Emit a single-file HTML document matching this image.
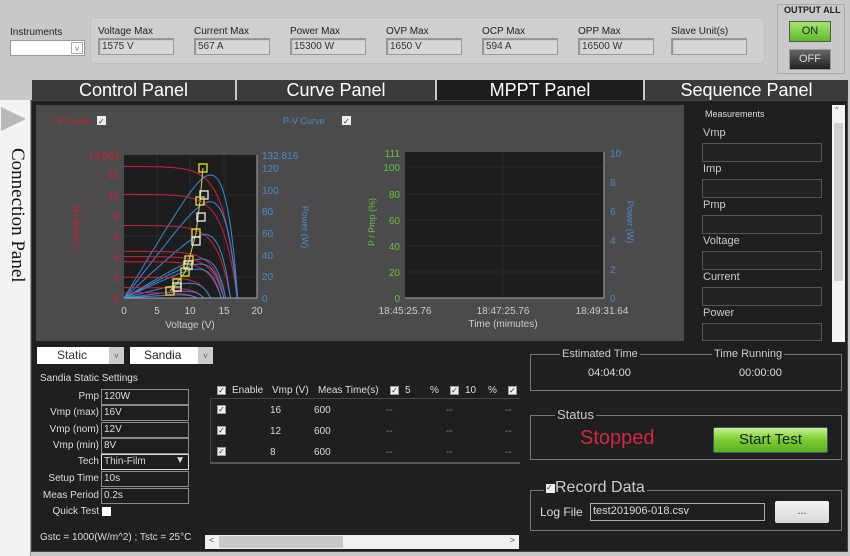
<!DOCTYPE html>
<html><head><meta charset="utf-8"><style>
*{box-sizing:border-box;margin:0;padding:0}
body{width:850px;height:556px;position:relative;overflow:hidden;background:#c9c9c9;font-family:"Liberation Sans",sans-serif}
.a{position:absolute}
.lbl{position:absolute;font-size:10px;color:#222}
.fld{position:absolute;height:17px;width:76px;background:#d6d6d6;border:1px solid #9a9a9a;box-shadow:inset 1px 1px 1px #888;font-size:10px;color:#333;padding:2px 3px}
.tab{position:absolute;top:80px;height:20px;background:#3a3a3a;color:#fff;font-size:18px;text-align:center;line-height:21px;transform-origin:center}
.w{color:#ddd;font-size:10px;position:absolute}
.inp{position:absolute;height:16px;width:88px;border:1px solid #8a8a8a;background:#1e1e1e;color:#ddd;font-size:10px;padding:1px 2px}
.cb{position:absolute;width:9px;height:9px;background:#eee;border:1px solid #999;font-size:8px;color:#333;line-height:7px;text-align:center}
.mb{position:absolute;left:702px;width:120px;height:19px;border:1px solid #555;background:#232323}
.ml{position:absolute;left:703px;color:#ccc;font-size:11px}
.box{position:absolute;border:1px solid #777}
.cap{position:absolute;background:#1f1f1f;color:#ccc;padding:0 2px}
</style></head><body>
<!-- top bar -->
<div class="lbl" style="left:10px;top:27px">Instruments</div>
<div class="a" style="left:10px;top:40px;width:75px;height:16px;background:#fff;border:1px solid #999"><div class="a" style="right:1px;top:1px;width:12px;height:12px;border:1px solid #aaa;font-size:8px;color:#777;text-align:center;line-height:11px">v</div></div>
<div class="a" style="left:90px;top:17px;width:675px;height:47px;border-radius:5px;background:#cfcfcf;border:1px solid #bdbdbd"></div>
<div class="lbl" style="left:98px;top:26px">Voltage Max</div><div class="fld" style="left:98px;top:38px">1575 V</div>
<div class="lbl" style="left:194px;top:26px">Current Max</div><div class="fld" style="left:194px;top:38px">567 A</div>
<div class="lbl" style="left:290px;top:26px">Power Max</div><div class="fld" style="left:290px;top:38px">15300 W</div>
<div class="lbl" style="left:386px;top:26px">OVP Max</div><div class="fld" style="left:386px;top:38px">1650 V</div>
<div class="lbl" style="left:482px;top:26px">OCP Max</div><div class="fld" style="left:482px;top:38px">594 A</div>
<div class="lbl" style="left:578px;top:26px">OPP Max</div><div class="fld" style="left:578px;top:38px">16500 W</div>
<div class="lbl" style="left:671px;top:26px">Slave Unit(s)</div><div class="fld" style="left:671px;top:38px"></div>
<div class="a" style="left:777px;top:4px;width:68px;height:70px;border:1px solid #aaa"></div>
<div class="lbl" style="left:784px;top:5px;font-size:9px;font-weight:bold">OUTPUT ALL</div>
<div class="a" style="left:789px;top:21px;width:42px;height:21px;background:linear-gradient(#a8e870,#5cb82a);border:1px solid #555;font-size:11px;text-align:center;line-height:19px;color:#222">ON</div>
<div class="a" style="left:789px;top:49px;width:42px;height:21px;background:linear-gradient(#666,#222);border:1px solid #999;font-size:11px;text-align:center;line-height:19px;color:#ddd">OFF</div>
<!-- tabs -->
<div class="tab" style="left:32px;width:203px">Control Panel</div>
<div class="tab" style="left:237px;width:198px">Curve Panel</div>
<div class="tab" style="left:437px;width:206px;background:#1c1c1c">MPPT Panel</div>
<div class="tab" style="left:645px;width:203px">Sequence Panel</div>
<!-- left strip -->
<div class="a" style="left:0;top:100px;width:31px;height:456px;background:#f3f3f3;border-right:1px solid #999"></div>
<svg class="a" style="left:0;top:106px" width="28" height="26"><polygon points="1,1 1,25 26,13" fill="#b8b8b8"/></svg>
<div class="a" style="left:2px;top:148px;width:26px;height:140px;"><div style="position:absolute;left:26px;top:0;transform:rotate(90deg);transform-origin:0 0;white-space:nowrap;font-family:'Liberation Serif',serif;font-size:19px;color:#111">Connection Panel</div></div>
<!-- main dark -->
<div class="a" style="left:31px;top:100px;width:817px;height:452px;background:#1f1f1f;border:1px solid #444"></div>
<div class="a" style="left:36px;top:105px;width:648px;height:236px;background:#4b4b4b"></div>
<svg class="a" style="left:0;top:0" width="850" height="556" id="sv" font-family="Liberation Sans, sans-serif" font-size="10">
<text x="52" y="124" fill="#d02030" font-size="9">I-V Curve</text>
<rect x="97" y="116" width="9" height="9" fill="#eee"/><text x="98" y="124" font-size="8" fill="#333">✓</text>
<text x="283" y="124" fill="#4a8ad0" font-size="9">P-V Curve</text>
<rect x="342" y="116" width="9" height="9" fill="#eee"/><text x="343" y="124" font-size="8" fill="#333">✓</text>
<rect x="124" y="155" width="133" height="143" fill="#1d1d1d"/>
<g stroke="#2c3a3a" stroke-width="0.6"><line x1="157" y1="155" x2="157" y2="298"/><line x1="190" y1="155" x2="190" y2="298"/><line x1="224" y1="155" x2="224" y2="298"/><line x1="124" y1="195" x2="257" y2="195"/><line x1="124" y1="236" x2="257" y2="236"/><line x1="124" y1="277" x2="257" y2="277"/></g>
<g id="curves"></g>
<polyline points="203,168 200,201 196,233 189,260 185,272 177,283 170,291" fill="none" stroke="#d8d860" stroke-width="1"/>
<g fill="none" stroke-width="1.3">
<rect x="199" y="164" width="8" height="8" stroke="#e0e040"/><rect x="200" y="191" width="8" height="8" stroke="#eee"/>
<rect x="196" y="197" width="8" height="8" stroke="#e0e040"/><rect x="197" y="213" width="8" height="8" stroke="#eee"/>
<rect x="192" y="229" width="8" height="8" stroke="#e0e040"/><rect x="192" y="237" width="8" height="8" stroke="#eee"/>
<rect x="185" y="256" width="8" height="8" stroke="#e0e040"/><rect x="184" y="261" width="8" height="8" stroke="#eee"/>
<rect x="181" y="268" width="8" height="8" stroke="#e0e040"/><rect x="173" y="279" width="8" height="8" stroke="#e0e040"/>
<rect x="173" y="283" width="8" height="8" stroke="#eee"/><rect x="166" y="287" width="8" height="8" stroke="#e0e040"/>
</g>
<line x1="124" y1="298" x2="257" y2="298" stroke="#aaa"/><line x1="257" y1="155" x2="257" y2="298" stroke="#aaa"/>
<g fill="#d02030" text-anchor="end"><text x="119" y="159">13.803</text><text x="119" y="178">12</text><text x="119" y="199">10</text><text x="119" y="220">8</text><text x="119" y="240">6</text><text x="119" y="261">4</text><text x="119" y="281">2</text><text x="119" y="302">0</text></g>
<g fill="#4a8ad0"><text x="262" y="159">132.816</text><text x="262" y="172">120</text><text x="262" y="194">100</text><text x="262" y="215">80</text><text x="262" y="237">60</text><text x="262" y="259">40</text><text x="262" y="280">20</text><text x="262" y="302">0</text></g>
<g fill="#ccc" text-anchor="middle"><text x="124" y="314">0</text><text x="157" y="314">5</text><text x="190" y="314">10</text><text x="224" y="314">15</text><text x="257" y="314">20</text><text x="190" y="328">Voltage (V)</text></g>
<text transform="translate(79,227) rotate(-90)" fill="#d02030" text-anchor="middle" font-size="9">Current (A)</text>
<text transform="translate(302,227) rotate(90)" fill="#4a8ad0" text-anchor="middle" font-size="9">Power (W)</text>
<!-- chart 2 -->
<rect x="405" y="152" width="199" height="146" fill="#1d1d1d"/>
<g stroke="#2c3a3a" stroke-width="0.6"><line x1="503" y1="152" x2="503" y2="298"/><line x1="405" y1="194" x2="604" y2="194"/><line x1="405" y1="220" x2="604" y2="220"/><line x1="405" y1="246" x2="604" y2="246"/><line x1="405" y1="272" x2="604" y2="272"/><line x1="405" y1="167" x2="604" y2="167"/></g>
<line x1="405" y1="298" x2="604" y2="298" stroke="#aaa"/><line x1="604" y1="152" x2="604" y2="298" stroke="#aaa"/>
<g fill="#6cc23a" text-anchor="end"><text x="400" y="157">111</text><text x="400" y="171">100</text><text x="400" y="198">80</text><text x="400" y="224">60</text><text x="400" y="250">40</text><text x="400" y="276">20</text><text x="400" y="302">0</text></g>
<g fill="#4a8ad0"><text x="610" y="157">10</text><text x="610" y="186">8</text><text x="610" y="215">6</text><text x="610" y="244">4</text><text x="610" y="273">2</text><text x="610" y="302">0</text></g>
<g fill="#ccc" text-anchor="middle"><text x="405" y="314">18:45:25.76</text><text x="503" y="314">18:47:25.76</text><text x="602" y="314">18:49:31.64</text><text x="503" y="327">Time (mimutes)</text></g>
<text transform="translate(375,222) rotate(-90)" fill="#6cc23a" text-anchor="middle" font-size="9">P / Pmp (%)</text>
<text transform="translate(627,222) rotate(90)" fill="#4a8ad0" text-anchor="middle" font-size="9">Power (W)</text>
</svg>
<!-- measurements -->
<div class="w" style="left:705px;top:109px;font-size:9px">Measurements</div>
<div class="ml" style="top:127px">Vmp</div><div class="mb" style="top:143px"></div>
<div class="ml" style="top:163px">Imp</div><div class="mb" style="top:179px"></div>
<div class="ml" style="top:199px">Pmp</div><div class="mb" style="top:215px"></div>
<div class="ml" style="top:235px">Voltage</div><div class="mb" style="top:251px"></div>
<div class="ml" style="top:271px">Current</div><div class="mb" style="top:287px"></div>
<div class="ml" style="top:307px">Power</div><div class="mb" style="top:323px;height:18px"></div>
<div class="a" style="left:832px;top:105px;width:13px;height:237px;background:#f4f4f4"><div class="a" style="left:2px;top:18px;width:9px;height:158px;background:#cfcfcf"></div><div class="a" style="left:3px;top:2px;font-size:7px;color:#555">^</div></div>
<!-- bottom left -->
<div class="a" style="left:37px;top:347px;width:87px;height:17px;background:#fff;font-size:12px;color:#333;padding-left:20px;line-height:17px">Static<div class="a" style="right:0;top:0;width:15px;height:17px;background:#ccc;font-size:8px;text-align:center;color:#666">v</div></div>
<div class="a" style="left:130px;top:347px;width:83px;height:17px;background:#fff;font-size:12px;color:#222;padding-left:14px;line-height:17px">Sandia<div class="a" style="right:0;top:0;width:15px;height:17px;background:#ccc;font-size:8px;text-align:center;color:#666">v</div></div>
<div class="w" style="left:40px;top:373px">Sandia Static Settings</div>
<div class="w" style="left:40px;top:391px;width:59px;text-align:right">Pmp</div><div class="inp" style="left:101px;top:389px">120W</div>
<div class="w" style="left:40px;top:407px;width:59px;text-align:right">Vmp (max)</div><div class="inp" style="left:101px;top:405px">16V</div>
<div class="w" style="left:40px;top:424px;width:59px;text-align:right">Vmp (nom)</div><div class="inp" style="left:101px;top:422px">12V</div>
<div class="w" style="left:40px;top:440px;width:59px;text-align:right">Vmp (min)</div><div class="inp" style="left:101px;top:438px">8V</div>
<div class="w" style="left:40px;top:456px;width:59px;text-align:right">Tech</div><div class="inp" style="left:101px;top:454px;border-color:#ddd">Thin-Film<span style="position:absolute;right:3px;top:0">▼</span></div>
<div class="w" style="left:40px;top:473px;width:59px;text-align:right">Setup Time</div><div class="inp" style="left:101px;top:471px">10s</div>
<div class="w" style="left:40px;top:490px;width:59px;text-align:right">Meas Period</div><div class="inp" style="left:101px;top:488px">0.2s</div>
<div class="w" style="left:40px;top:506px;width:59px;text-align:right">Quick Test</div><div class="a" style="left:102px;top:507px;width:9px;height:9px;background:#fff"></div>
<div class="w" style="left:40px;top:532px">Gstc = 1000(W/m^2) ; Tstc = 25°C</div>
<!-- table -->
<div class="cb" style="left:217px;top:386px">✓</div>
<div class="w" style="left:232px;top:385px">Enable</div><div class="w" style="left:272px;top:385px">Vmp (V)</div><div class="w" style="left:318px;top:385px">Meas Time(s)</div>
<div class="cb" style="left:390px;top:386px">✓</div><div class="w" style="left:405px;top:385px">5</div><div class="w" style="left:430px;top:385px">%</div>
<div class="cb" style="left:450px;top:386px">✓</div><div class="w" style="left:465px;top:385px">10</div><div class="w" style="left:488px;top:385px">%</div>
<div class="cb" style="left:508px;top:386px">✓</div>
<div class="a" style="left:210px;top:398px;width:310px;height:66px;border-top:1px solid #444;border-left:1px solid #444;border-bottom:2px solid #555"></div>
<div class="cb" style="left:217px;top:405px">✓</div><div class="w" style="left:270px;top:405px">16</div><div class="w" style="left:314px;top:405px">600</div>
<div class="cb" style="left:217px;top:426px">✓</div><div class="w" style="left:270px;top:426px">12</div><div class="w" style="left:314px;top:426px">600</div>
<div class="cb" style="left:217px;top:447px">✓</div><div class="w" style="left:270px;top:447px">8</div><div class="w" style="left:314px;top:447px">600</div>
<div class="w" style="left:386px;top:405px;color:#888">--</div><div class="w" style="left:446px;top:405px;color:#888">--</div><div class="w" style="left:505px;top:405px;color:#888">--</div>
<div class="w" style="left:386px;top:426px;color:#888">--</div><div class="w" style="left:446px;top:426px;color:#888">--</div><div class="w" style="left:505px;top:426px;color:#888">--</div>
<div class="w" style="left:386px;top:447px;color:#888">--</div><div class="w" style="left:446px;top:447px;color:#888">--</div><div class="w" style="left:505px;top:447px;color:#888">--</div>
<div class="a" style="left:205px;top:535px;width:314px;height:14px;background:#f0f0f0"><div class="a" style="left:14px;top:1px;width:124px;height:12px;background:#c8c8c8"></div><div class="a" style="left:4px;top:0;font-size:9px;color:#555">&lt;</div><div class="a" style="right:4px;top:0;font-size:9px;color:#555">&gt;</div></div>
<!-- right bottom -->
<div class="box" style="left:530px;top:354px;width:312px;height:37px"></div>
<div class="cap" style="left:560px;top:348px;font-size:11px">Estimated Time</div>
<div class="cap" style="left:712px;top:348px;font-size:11px">Time Running</div>
<div class="w" style="left:588px;top:367px;font-size:11px">04:04:00</div>
<div class="w" style="left:739px;top:367px;font-size:11px">00:00:00</div>
<div class="box" style="left:530px;top:415px;width:312px;height:45px"></div>
<div class="cap" style="left:555px;top:407px;font-size:13px">Status</div>
<div class="a" style="left:580px;top:427px;font-size:20px;color:#d02840">Stopped</div>
<div class="a" style="left:713px;top:427px;width:115px;height:26px;background:linear-gradient(#c8f090,#7ccc30 50%,#5ab020);border:1px solid #456;border-radius:2px;font-size:15px;text-align:center;line-height:24px;color:#123">Start Test</div>
<div class="box" style="left:530px;top:490px;width:312px;height:41px"></div>
<div class="cap" style="left:544px;top:479px;font-size:16px"><span style="display:inline-block;width:9px;height:9px;background:#eee;font-size:8px;color:#333;line-height:8px;vertical-align:2px">✓</span>Record Data</div>
<div class="w" style="left:540px;top:505px;font-size:12px">Log File</div>
<div class="a" style="left:590px;top:503px;width:175px;height:18px;border:1px solid #aaa;color:#ddd;font-size:11px;padding:1px 2px">test201906-018.csv</div>
<div class="a" style="left:775px;top:501px;width:54px;height:22px;background:linear-gradient(#f4f4f4,#d8d8d8);border-radius:2px;font-size:11px;text-align:center;line-height:20px;color:#333">...</div>
<script>
var g=document.getElementById('curves'),ns="http://www.w3.org/2000/svg";
var X=v=>124+v*6.65,YI=i=>298-i*10.36,YP=p=>298-p*1.077;
var cs=[[12.7,17.1],[10,17],[7,16],[4.5,15.3],[4,15],[3.5,14.6],[2,13],[1,12],[0.5,11]];
cs.forEach(c=>{var isc=c[0],voc=c[1],a=voc*0.12,di="",dp="";
for(var k=0;k<=60;k++){var v=voc*k/60,i=isc*(1-Math.exp((v-voc)/a))/(1-Math.exp(-voc/a));if(i<0)i=0;
di+=(k?"L":"M")+X(v).toFixed(1)+","+YI(i).toFixed(1);dp+=(k?"L":"M")+X(v).toFixed(1)+","+YP(v*i*0.8).toFixed(1);}
[[di,"#d0203a"],[dp,"#3a8ad8"]].forEach(q=>{var p=document.createElementNS(ns,"path");p.setAttribute("d",q[0]);p.setAttribute("fill","none");p.setAttribute("stroke",q[1]);p.setAttribute("stroke-width","1");g.appendChild(p);});});
</script>
</body></html>
